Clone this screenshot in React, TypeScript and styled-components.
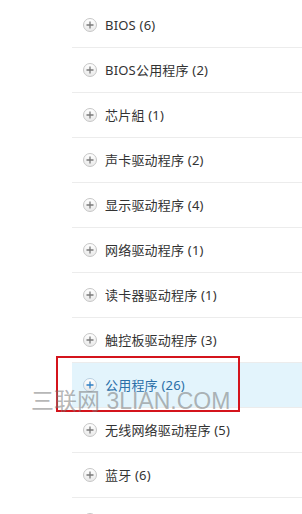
import React from 'react';
import styled, {createGlobalStyle} from 'styled-components';

const GlobalStyle = createGlobalStyle`
  html, body {
    margin: 0;
    padding: 0;
    background: #fff;
  }
  body {
    font-family: "Noto Sans", "Noto Sans CJK SC", sans-serif;
    overflow: hidden;
  }
`

type CategoryType = {
    name?: string
    count?: number
}

const categories: CategoryType[] = [
    {name: 'BIOS', count: 6},
    {name: 'BIOS公用程序', count: 2},
    {name: '芯片組', count: 1},
    {name: '声卡驱动程序', count: 2},
    {name: '显示驱动程序', count: 4},
    {name: '网络驱动程序', count: 1},
    {name: '读卡器驱动程序', count: 1},
    {name: '触控板驱动程序', count: 3},
    {name: '公用程序', count: 26},
    {name: '无线网络驱动程序', count: 5},
    {name: '蓝牙', count: 6},
    {},
]

const ACTIVE = '公用程序'

const PlusIcon = ({active}: {active?: boolean}) => (
    <IconCircle $active={active}>
        <svg width="8" height="8" viewBox="0 0 8 8">
            <path d="M4 0.5V7.5M0.5 4H7.5" stroke={active ? '#2f7fc4' : '#7a7a7a'} strokeWidth="1.3"/>
        </svg>
    </IconCircle>
)

export default function App() {
    return (
        <Page>
            <GlobalStyle/>
            <List>
                {categories.map((c, i) => {
                    const active = c.name === ACTIVE
                    return (
                        <Row key={i} $active={active}>
                            <PlusIcon active={active}/>
                            {c.name && <Label $active={active}>{c.name} ({c.count})</Label>}
                        </Row>
                    )
                })}
            </List>
            <Marker/>
            <Watermark>三联网 3LIAN.COM</Watermark>
        </Page>
    );
}

const Page = styled.div`
  position: relative;
  width: 302px;
  height: 514px;
  overflow: hidden;
  background: #fff;
`
const List = styled.ul`
  list-style: none;
  margin: 0 0 0 72px;
  padding: 3px 0 0;
`
const Row = styled.li<{$active?: boolean}>`
  display: flex;
  align-items: center;
  gap: 8px;
  height: 44px;
  padding-left: 11px;
  border-bottom: 1px solid #ececec;
  background: ${p => p.$active ? '#e3f4fc' : '#fff'};
`
const IconCircle = styled.span<{$active?: boolean}>`
  display: flex;
  align-items: center;
  justify-content: center;
  width: 14px;
  height: 14px;
  box-sizing: border-box;
  border-radius: 50%;
  border: 1px solid ${p => p.$active ? '#b9cfe0' : '#c6c6c6'};
  background: linear-gradient(#ffffff, #e9e9e9);
  flex-shrink: 0;
`
const Label = styled.span<{$active?: boolean}>`
  font-size: 13px;
  line-height: 16px;
  letter-spacing: 0.2px;
  color: ${p => p.$active ? '#2a6fa8' : '#333'};
  white-space: nowrap;
`
const Marker = styled.div`
  position: absolute;
  left: 56px;
  top: 356px;
  width: 184px;
  height: 56px;
  box-sizing: border-box;
  border: 2px solid #d4141c;
`
const Watermark = styled.div`
  position: absolute;
  left: 31px;
  top: 388px;
  font-family: "Liberation Sans", "Noto Sans CJK SC", sans-serif;
  font-size: 23px;
  line-height: 26px;
  letter-spacing: 0px;
  color: rgba(120, 120, 120, 0.55);
  white-space: nowrap;
`
